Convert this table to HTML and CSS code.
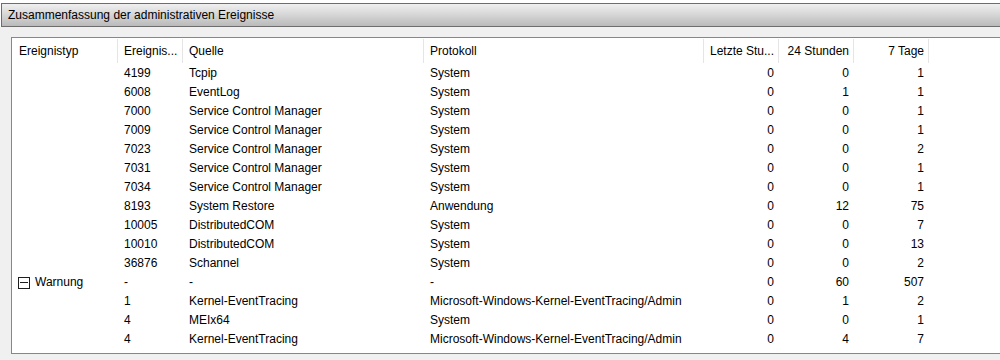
FILE: index.html
```html
<!DOCTYPE html>
<html lang="de">
<head>
  <meta charset="UTF-8" />
  <title>Administrative Ereignisse</title>
  <link rel="stylesheet" href="styles.css">
</head>
<body>

  <div class="panel">
    <div class="panel-title">Zusammenfassung der administrativen Ereignisse</div>

    <div class="panel-body">
      <div class="list">
        <div class="row head">
          <div class="cell">Ereignistyp</div>
          <div class="cell">Ereignis...</div>
          <div class="cell">Quelle</div>
          <div class="cell">Protokoll</div>
          <div class="cell num">Letzte Stu...</div>
          <div class="cell num">24 Stunden</div>
          <div class="cell num">7 Tage</div>
        </div>

        <div class="row"><div class="cell"></div><div class="cell">4199</div><div class="cell">Tcpip</div><div class="cell">System</div><div class="cell num">0</div><div class="cell num">0</div><div class="cell num">1</div></div>
        <div class="row"><div class="cell"></div><div class="cell">6008</div><div class="cell">EventLog</div><div class="cell">System</div><div class="cell num">0</div><div class="cell num">1</div><div class="cell num">1</div></div>
        <div class="row"><div class="cell"></div><div class="cell">7000</div><div class="cell">Service Control Manager</div><div class="cell">System</div><div class="cell num">0</div><div class="cell num">0</div><div class="cell num">1</div></div>
        <div class="row"><div class="cell"></div><div class="cell">7009</div><div class="cell">Service Control Manager</div><div class="cell">System</div><div class="cell num">0</div><div class="cell num">0</div><div class="cell num">1</div></div>
        <div class="row"><div class="cell"></div><div class="cell">7023</div><div class="cell">Service Control Manager</div><div class="cell">System</div><div class="cell num">0</div><div class="cell num">0</div><div class="cell num">2</div></div>
        <div class="row"><div class="cell"></div><div class="cell">7031</div><div class="cell">Service Control Manager</div><div class="cell">System</div><div class="cell num">0</div><div class="cell num">0</div><div class="cell num">1</div></div>
        <div class="row"><div class="cell"></div><div class="cell">7034</div><div class="cell">Service Control Manager</div><div class="cell">System</div><div class="cell num">0</div><div class="cell num">0</div><div class="cell num">1</div></div>
        <div class="row"><div class="cell"></div><div class="cell">8193</div><div class="cell">System Restore</div><div class="cell">Anwendung</div><div class="cell num">0</div><div class="cell num">12</div><div class="cell num">75</div></div>
        <div class="row"><div class="cell"></div><div class="cell">10005</div><div class="cell">DistributedCOM</div><div class="cell">System</div><div class="cell num">0</div><div class="cell num">0</div><div class="cell num">7</div></div>
        <div class="row"><div class="cell"></div><div class="cell">10010</div><div class="cell">DistributedCOM</div><div class="cell">System</div><div class="cell num">0</div><div class="cell num">0</div><div class="cell num">13</div></div>
        <div class="row"><div class="cell"></div><div class="cell">36876</div><div class="cell">Schannel</div><div class="cell">System</div><div class="cell num">0</div><div class="cell num">0</div><div class="cell num">2</div></div>

        <!-- Warnungen -->
        <div class="row"><div class="cell group"><span class="expander"></span>Warnung</div><div class="cell">-</div><div class="cell">-</div><div class="cell">-</div><div class="cell num">0</div><div class="cell num">60</div><div class="cell num">507</div></div>
        <div class="row"><div class="cell"></div><div class="cell">1</div><div class="cell">Kernel-EventTracing</div><div class="cell">Microsoft-Windows-Kernel-EventTracing/Admin</div><div class="cell num">0</div><div class="cell num">1</div><div class="cell num">2</div></div>
        <div class="row"><div class="cell"></div><div class="cell">4</div><div class="cell">MEIx64</div><div class="cell">System</div><div class="cell num">0</div><div class="cell num">0</div><div class="cell num">1</div></div>
        <div class="row"><div class="cell"></div><div class="cell">4</div><div class="cell">Kernel-EventTracing</div><div class="cell">Microsoft-Windows-Kernel-EventTracing/Admin</div><div class="cell num">0</div><div class="cell num">4</div><div class="cell num">7</div></div>
      </div>
    </div>
  </div>

</body>
</html>
```

FILE: styles.css
```css
* {
  box-sizing: border-box;
}

body {
  margin: 0;
  font-family: "Liberation Sans", Arial, sans-serif;
  font-size: 12px;
  color: #000;
  background-color: #fff;
}

.panel {
  padding-top: 3px;
}

.panel-title {
  margin-left: 1px;
  height: 24px;
  line-height: 22px;
  padding-left: 6px;
  border: 1px solid #6d6d6d;
  border-right: none;
  background: linear-gradient(#f0f0f0, #bababa);
}

.panel-body {
  background-color: #f0f0f0;
  padding: 10px 0 7px 11px;
}

.list {
  height: 317px;
  background-color: #fff;
  border: 1px solid #828790;
  border-right: none;
}

.row {
  display: grid;
  grid-template-columns: 106px 65px 241px 280px 75px 75px 75px;
  height: 19px;
  line-height: 19px;
}

.row.head {
  height: 26px;
  line-height: 24px;
}

.cell {
  padding: 0 6px;
  white-space: nowrap;
  overflow: hidden;
}

.cell.num {
  text-align: right;
  padding-right: 5px;
}

.head .cell {
  margin: 1px 0;
  border-right: 1px solid #e5e5e5;
}

.head .cell.num {
  padding-right: 4px;
}

.head .cell:first-child {
  padding-left: 7px;
}

.group {
  display: flex;
  align-items: center;
}

/* Baum-Knoten (eingeklappt / ausgeklappt) */
.expander {
  display: inline-flex;
  align-items: center;
  justify-content: center;
  width: 12px;
  height: 12px;
  margin-right: 5px;
  border: 1px solid #1e1e1e;
}

.expander::before {
  content: "";
  width: 8px;
  height: 1px;
  background-color: #1e1e1e;
}
```
